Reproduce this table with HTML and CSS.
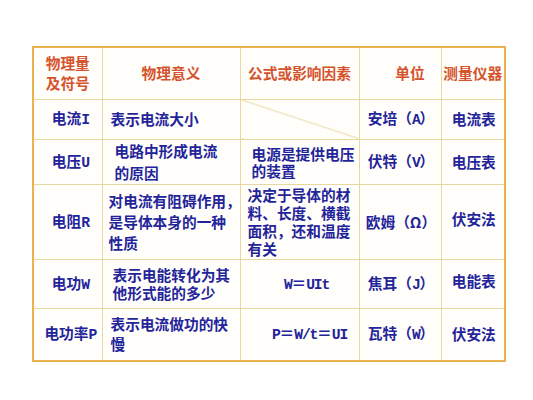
FILE: index.html
```html
<!DOCTYPE html>
<html lang="zh">
<head>
<meta charset="utf-8">
<link rel="stylesheet" href="styles.css">
</head>
<body>
<table class="tbl">
  <colgroup>
    <col class="c1"><col class="c2"><col class="c3"><col class="c4"><col class="c5">
  </colgroup>
  <tr class="r0">
    <th class="lh20">物理量<br>及符号</th>
    <th>物理意义</th>
    <th>公式或影响因素</th>
    <th class="unit-h">单位</th>
    <th>测量仪器</th>
  </tr>
  <tr class="r1">
    <td class="name">电流<span class="en">I</span></td>
    <td class="desc p8">表示电流大小</td>
    <td class="diag"></td>
    <td class="mid">安培（<span class="en">A</span>）</td>
    <td class="mid">电流表</td>
  </tr>
  <tr class="r2">
    <td class="name">电压<span class="en">U</span></td>
    <td class="desc p12 lh22">电路中形成电流<br>的原因</td>
    <td class="desc p11 lh17">电源是提供电压<br>的装置</td>
    <td class="mid">伏特（<span class="en">V</span>）</td>
    <td class="mid">电压表</td>
  </tr>
  <tr class="r3">
    <td class="name">电阻<span class="en">R</span></td>
    <td class="desc p6 lh21">对电流有阻碍作用，<br>是导体本身的一种<br>性质</td>
    <td class="desc p7 lh18">决定于导体的材<br>料、长度、横截<br>面积，还和温度<br>有关</td>
    <td class="mid">欧姆（Ω）</td>
    <td class="mid up">伏安法</td>
  </tr>
  <tr class="r4">
    <td class="name">电功<span class="en">W</span></td>
    <td class="desc p10 lh18">表示电能转化为其<br>他形式能的多少</td>
    <td class="formula"><span class="en">W</span>＝<span class="en">UIt</span></td>
    <td class="mid">焦耳（<span class="en">J</span>）</td>
    <td class="mid up">电能表</td>
  </tr>
  <tr class="r5">
    <td class="name">电功率<span class="en">P</span></td>
    <td class="desc p8 lh20">表示电流做功的快<br>慢</td>
    <td class="formula f2"><span class="en">P</span>＝<span class="en">W/t</span>＝<span class="en">UI</span></td>
    <td class="mid">瓦特（<span class="en">W</span>）</td>
    <td class="mid">伏安法</td>
  </tr>
</table>
</body>
</html>
```

FILE: styles.css
```css
html, body {
  margin: 0;
  padding: 0;
  background: #ffffff;
}

body {
  width: 533px;
  height: 400px;
  overflow: hidden;
  font-family: "Noto Sans CJK SC", "Noto Sans", sans-serif;
}

.tbl {
  margin: 46px 0 0 32px;
  border-collapse: collapse;
  table-layout: fixed;
  width: 474px;
  border: 2px solid #e9b24e;
  background: #fffefa;
}

.c1 { width: 69px; }
.c2 { width: 138px; }
.c3 { width: 119px; }
.c4 { width: 82px; }
.c5 { width: 64px; }

.r0 { height: 52px; }
.r1 { height: 40px; }
.r2 { height: 43px; }
.r3 { height: 75px; }
.r4 { height: 49px; }
.r5 { height: 53px; }

th, td {
  border: 1px solid #e8d8a0;
  padding: 0;
  font-size: 14.7px;
  font-weight: 700;
  white-space: nowrap;
  vertical-align: middle;
  line-height: 20px;
}

th {
  color: #d4532d;
  text-align: center;
}

td {
  color: #24249a;
}

.en {
  font-family: "Liberation Mono", monospace;
  font-weight: 700;
  letter-spacing: -1.2px;
}

.name {
  text-align: center;
  padding-left: 5px;
}

.desc {
  text-align: left;
}

.mid {
  text-align: center;
  padding-left: 2px;
}

.up {
  padding-bottom: 5px;
}

.formula {
  text-align: center;
  padding-left: 14px;
}

.f2 {
  padding-left: 20px;
}

.unit-h {
  padding-left: 20px;
}

.diag {
  background: linear-gradient(to top right, transparent calc(50% - 0.8px), #e2d08e 50%, transparent calc(50% + 0.8px));
}

.p6 { padding-left: 6px; }
.p7 { padding-left: 7px; }
.p8 { padding-left: 8px; }
.p10 { padding-left: 10px; }
.p11 { padding-left: 11px; }
.p12 { padding-left: 12px; }

.lh17 { line-height: 17px; }
.lh18 { line-height: 18px; }
.lh20 { line-height: 20px; }
.lh21 { line-height: 21px; }
.lh22 { line-height: 22px; }
```
